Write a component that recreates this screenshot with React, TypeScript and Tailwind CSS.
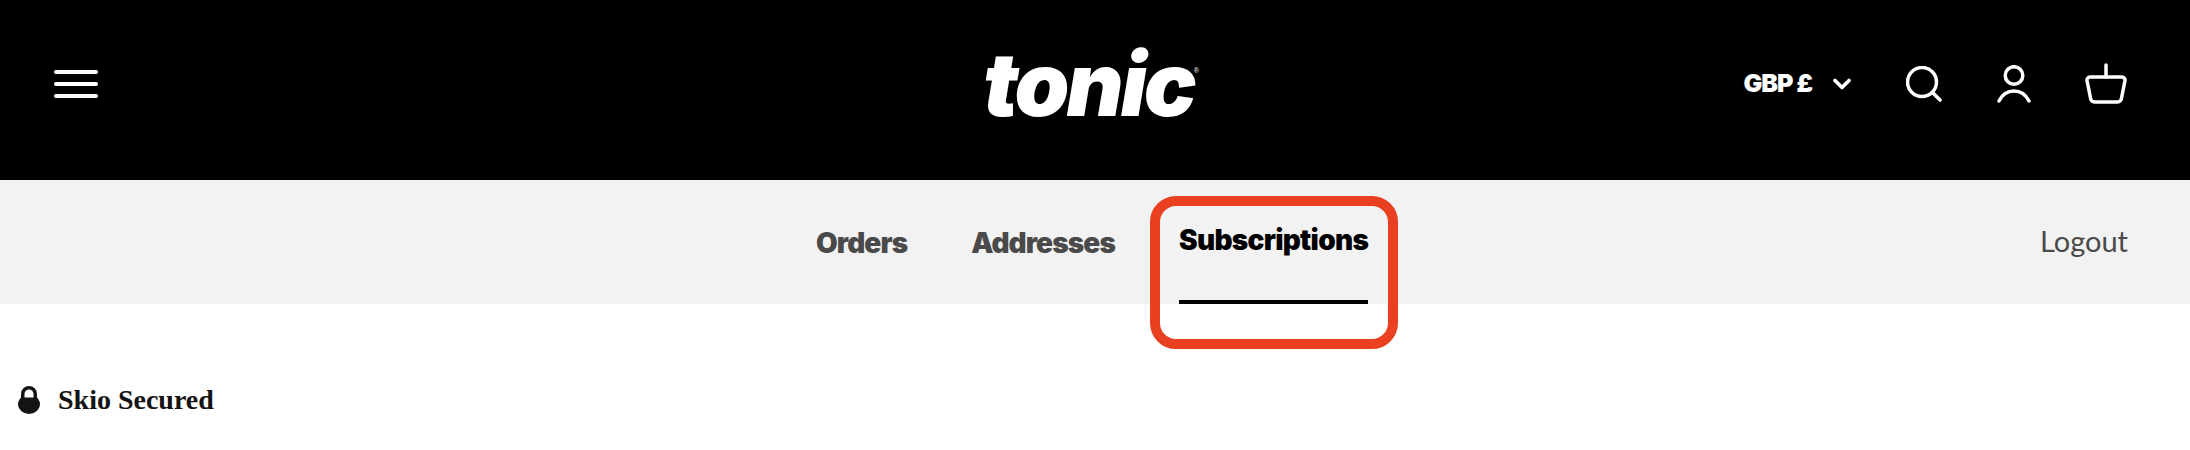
const navItems = ['Orders', 'Addresses']

function MenuIcon() {
  return (
    <svg width="44" height="28" viewBox="0 0 44 28" fill="none" stroke="white" strokeWidth="4" strokeLinecap="round">
      <path d="M2 2h40M2 14h40M2 26h40" />
    </svg>
  )
}

function ChevronIcon() {
  return (
    <svg width="18" height="12" viewBox="0 0 18 12" fill="none" stroke="white" strokeWidth="3.6" strokeLinecap="round" strokeLinejoin="round">
      <path d="M2 2.500 9 9.500 16 2.500" />
    </svg>
  )
}

function SearchIcon() {
  return (
    <svg width="36" height="36" viewBox="0 0 36 36" fill="none" stroke="white" strokeWidth="3.5" strokeLinecap="round">
      <circle cx="16" cy="16" r="14.500" />
      <path d="M27 27l7 7" />
    </svg>
  )
}

function UserIcon() {
  return (
    <svg width="36" height="38" viewBox="0 0 36 38" fill="none" stroke="white" strokeWidth="3.5" strokeLinecap="round">
      <circle cx="18" cy="10.500" r="8.800" />
      <path d="M3 36c3-6 8-10 15-10s12 4 15 10" />
    </svg>
  )
}

function BasketIcon() {
  return (
    <svg width="44" height="42" viewBox="0 0 44 42" fill="none" stroke="white" strokeWidth="3.5" strokeLinecap="round" strokeLinejoin="round">
      <path d="M22 2v12" />
      <path d="M6 14h32a3 3 0 0 1 3 3.500l-3.500 17.500a4 4 0 0 1-4 4H10.500a4 4 0 0 1-4-4L3 17.500A3 3 0 0 1 6 14Z" />
    </svg>
  )
}

function LockIcon() {
  return (
    <svg width="22" height="28" viewBox="0 0 22 28" fill="#141414">
      <path fillRule="evenodd" d="M3 12V8a8 8 0 0 1 16 0v4h-3.500V8a4.500 4.500 0 0 0-9 0v4Z" />
      <path d="M3 11.500H19C21 14 22 16 22 17.500A11 10.500 0 0 1 0 17.500C0 16 1 14 3 11.500Z" />
    </svg>
  )
}

export default function App() {
  return (
    <div className="h-[450px] w-full overflow-hidden bg-white">
      <header className="grid h-[180px] grid-cols-[1fr_auto_1fr] items-center bg-black pb-[12px] pl-[54px] pr-[62px] text-white">
        <MenuIcon />
        <div className="flex items-start">
          <span className="font-['Inter',sans-serif] text-[88px] font-black italic leading-[104px] tracking-[-3px]">tonic</span>
          <span className="mt-[34px] font-['Liberation_Sans',sans-serif] text-[7px]">®</span>
        </div>
        <div className="flex items-center justify-end">
          <span className="font-['Inter',sans-serif] text-[25px] font-black tracking-[-1px]">GBP £</span>
          <span className="ml-[21px] mr-[55px] flex"><ChevronIcon /></span>
          <SearchIcon />
          <span className="ml-[54px] mr-[52px] flex"><UserIcon /></span>
          <BasketIcon />
        </div>
      </header>

      <nav className="flex h-[124px] items-start justify-between bg-[#f2f2f2] pl-[816px] pr-[62px]">
        <div className="flex items-start">
          {navItems.map((item) => (
            <a key={item} className="mr-[64px] pt-[43px] font-['Inter',sans-serif] text-[28px] font-black leading-[40px] tracking-[-0.9px] text-[#4a4a4a]">
              {item}
            </a>
          ))}
          <a className="h-[124px] border-b-4 border-black pt-[40px] font-['Inter',sans-serif] text-[28px] font-black leading-[40px] tracking-[-0.7px] text-black">
            Subscriptions
          </a>
        </div>
        <a className="pt-[41px] font-['Lato',sans-serif] text-[29px] leading-[40px] text-[#4a4a4a]">Logout</a>
      </nav>

      <div className="flex items-center gap-[18px] pl-[18px] pt-[80px]">
        <LockIcon />
        <span className="font-['Liberation_Serif',serif] text-[28px] font-bold leading-[32px] text-[#141414]">Skio Secured</span>
      </div>

      <div className="absolute left-[1150px] top-[196px] h-[153px] w-[248px] rounded-[26px] border-[10px] border-[#e84020]" />
    </div>
  )
}
